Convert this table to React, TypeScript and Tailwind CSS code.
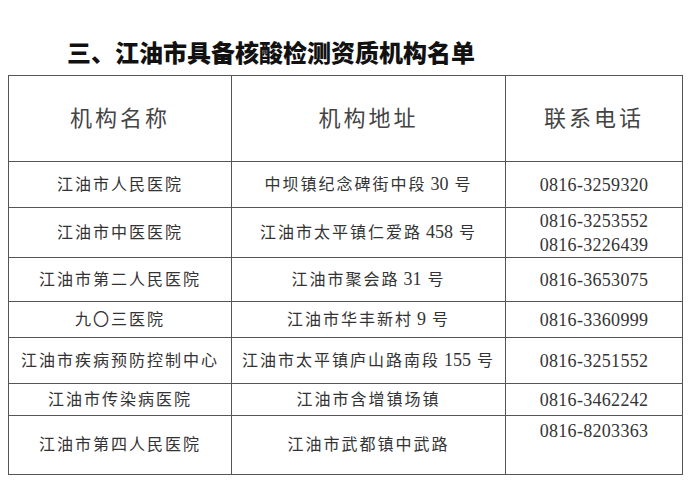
import React from 'react';

type Row = { name: string; addr: [string, string?, string?]; phones: string[]; h: string };

const rows: Row[] = [
  { name: '江油市人民医院', addr: ['中坝镇纪念碑街中段', '30', '号'], phones: ['0816-3259320'], h: 'h-[46px]' },
  { name: '江油市中医医院', addr: ['江油市太平镇仁爱路', '458', '号'], phones: ['0816-3253552', '0816-3226439'], h: 'h-[50px]' },
  { name: '江油市第二人民医院', addr: ['江油市聚会路', '31', '号'], phones: ['0816-3653075'], h: 'h-[44px]' },
  { name: '九〇三医院', addr: ['江油市华丰新村', '9', '号'], phones: ['0816-3360999'], h: 'h-[36px]' },
  { name: '江油市疾病预防控制中心', addr: ['江油市太平镇庐山路南段', '155', '号'], phones: ['0816-3251552'], h: 'h-[46px]' },
  { name: '江油市传染病医院', addr: ['江油市含增镇场镇'], phones: ['0816-3462242'], h: 'h-[32px]' },
];

const cell = 'border-[1.5px] border-[#555] text-center align-middle p-0';

const Addr = ({ parts }: { parts: Row['addr'] }) => (
  <>
    {parts[0]}
    {parts[1] && (
      <>
        <span className="text-[18px] tracking-normal ml-[4px] mr-[6px]">{parts[1]}</span>
        {parts[2]}
      </>
    )}
  </>
);

const App: React.FC = () => {
  return (
    <div className="w-[700px] h-[500px] bg-white overflow-hidden font-['Liberation_Serif','Noto_Sans_CJK_SC',serif]">
      <h1 className="pl-[67px] pt-[36px] h-[75px] text-[24px] leading-[32px] font-black text-[#111] font-['Noto_Sans_CJK_SC',sans-serif]">
        三、江油市具备核酸检测资质机构名单
      </h1>
      <table className="ml-[8px] w-[674px] table-fixed border-collapse text-[#333]">
        <colgroup>
          <col className="w-[223px]" />
          <col className="w-[274px]" />
          <col className="w-[177px]" />
        </colgroup>
        <tbody>
          <tr className="h-[86px] text-[22px] tracking-[3px] text-[#444]">
            <td className={cell}>机构名称</td>
            <td className={cell}>机构地址</td>
            <td className={cell}>联系电话</td>
          </tr>
          {rows.map((r) => (
            <tr key={r.name} className={`${r.h} text-[16px]`}>
              <td className={`${cell} tracking-[2px]`}>{r.name}</td>
              <td className={`${cell} tracking-[2px]`}>
                <Addr parts={r.addr} />
              </td>
              <td className={`${cell} text-[18px] leading-[24px] tracking-[0.3px]`}>
                {r.phones.map((p) => (
                  <div key={p}>{p}</div>
                ))}
              </td>
            </tr>
          ))}
          <tr className="h-[59px] text-[16px]">
            <td className={`${cell} tracking-[2px]`}>江油市第四人民医院</td>
            <td className={`${cell} tracking-[2px]`}>江油市武都镇中武路</td>
            <td className={`${cell} !align-top pt-[3px] text-[18px] leading-[24px] tracking-[0.3px]`}>
              0816-8203363
            </td>
          </tr>
        </tbody>
      </table>
    </div>
  );
};

export default App;
